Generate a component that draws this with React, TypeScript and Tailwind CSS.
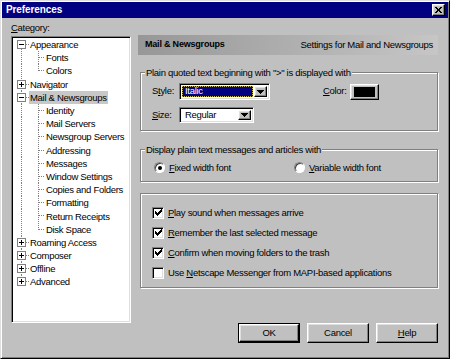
import React from "react";

const font = "font-['Liberation_Sans',Arial,sans-serif]";

const raised =
  "border border-t-white border-l-white border-r-black border-b-black shadow-[inset_-1px_-1px_0_#808080,inset_1px_1px_0_#dfdfdf]";
const sunken =
  "border border-t-[#808080] border-l-[#808080] border-r-white border-b-white shadow-[inset_1px_1px_0_#000,inset_-1px_-1px_0_#dfdfdf]";

type TreeItem = {
  label: string;
  level: 0 | 1;
  toggle?: "+" | "-";
  last?: boolean;
  selected?: boolean;
};

const tree: TreeItem[] = [
  { label: "Appearance", level: 0, toggle: "-" },
  { label: "Fonts", level: 1 },
  { label: "Colors", level: 1, last: true },
  { label: "Navigator", level: 0, toggle: "+" },
  { label: "Mail & Newsgroups", level: 0, toggle: "-", selected: true },
  { label: "Identity", level: 1 },
  { label: "Mail Servers", level: 1 },
  { label: "Newsgroup Servers", level: 1 },
  { label: "Addressing", level: 1 },
  { label: "Messages", level: 1 },
  { label: "Window Settings", level: 1 },
  { label: "Copies and Folders", level: 1 },
  { label: "Formatting", level: 1 },
  { label: "Return Receipts", level: 1 },
  { label: "Disk Space", level: 1, last: true },
  { label: "Roaming Access", level: 0, toggle: "+" },
  { label: "Composer", level: 0, toggle: "+" },
  { label: "Offline", level: 0, toggle: "+" },
  { label: "Advanced", level: 0, toggle: "+" },
];

function RootCell({ first, last, toggle }: { first?: boolean; last?: boolean; toggle?: "+" | "-" }) {
  return (
    <svg viewBox="0 0 16 13" preserveAspectRatio="none" className="h-full w-[16px] shrink-0" shapeRendering="crispEdges">
      <line x1="8.5" y1={first ? 6.5 : 0} x2="8.5" y2={last ? 6.5 : 13} stroke="#808080" strokeDasharray="1 1" />
      {toggle && (
        <>
          <line x1="13" y1="6.5" x2="16" y2="6.5" stroke="#808080" strokeDasharray="1 1" />
          <rect x="4.5" y="2.5" width="8" height="8" fill="#fff" stroke="#808080" />
          <line x1="6" y1="6.5" x2="11" y2="6.5" stroke="#000" />
          {toggle === "+" && <line x1="8.5" y1="4" x2="8.5" y2="9" stroke="#000" />}
        </>
      )}
    </svg>
  );
}

function ChildCell({ last }: { last?: boolean }) {
  return (
    <svg viewBox="0 0 16 13" preserveAspectRatio="none" className="h-full w-[16px] shrink-0" shapeRendering="crispEdges">
      <line x1="9.5" y1="0" x2="9.5" y2={last ? 6.5 : 13} stroke="#808080" strokeDasharray="1 1" />
      <line x1="10" y1="6.5" x2="16" y2="6.5" stroke="#808080" strokeDasharray="1 1" />
    </svg>
  );
}

function U({ children }: { children: React.ReactNode }) {
  return <span className="underline underline-offset-[1px]">{children}</span>;
}

function DropButton() {
  return (
    <div className={`flex h-full w-[13px] shrink-0 items-center justify-center bg-[#c0c0c0] ${raised}`}>
      <svg width="7" height="4" viewBox="0 0 7 4" shapeRendering="crispEdges">
        <path d="M0 0H7L3.5 4Z" fill="#000" />
      </svg>
    </div>
  );
}

function Group({ title, className, children }: { title?: string; className?: string; children?: React.ReactNode }) {
  return (
    <div className={`relative ml-[2px] border border-[#808080] shadow-[inset_1px_1px_0_#fff,1px_1px_0_#fff] ${className}`}>
      {title && (
        <span className="absolute left-[4px] top-[-7px] bg-[#c0c0c0] px-[1px] leading-[13px]">{title}</span>
      )}
      {children}
    </div>
  );
}

function Check({ checked, children }: { checked?: boolean; children: React.ReactNode }) {
  return (
    <div className="flex h-[13px] items-center">
      <div className={`flex h-[12px] w-[12px] shrink-0 items-center justify-center bg-white ${sunken}`}>
        {checked && (
          <svg width="7" height="7" viewBox="0 0 7 7" shapeRendering="crispEdges">
            <path d="M0 2h1v1h1v1h1V3h1V2h1V1h1V0h1v3h-1v1h-1v1h-1v1h-1v1H2V6H1V5H0Z" fill="#000" />
          </svg>
        )}
      </div>
      <span className="ml-[4px] whitespace-nowrap leading-[13px]">{children}</span>
    </div>
  );
}

function Radio({ checked, children, className }: { checked?: boolean; children: React.ReactNode; className?: string }) {
  return (
    <div className={`flex h-[13px] items-center ${className ?? ""}`}>
      <div className="flex h-[11px] w-[11px] items-center justify-center rounded-full border border-t-[#808080] border-l-[#808080] border-r-white border-b-white bg-white shadow-[inset_1px_1px_0_#404040]">
        {checked && <div className="h-[4px] w-[4px] rounded-full bg-black" />}
      </div>
      <span className="ml-[4px] leading-[13px]">{children}</span>
    </div>
  );
}

function Button({ children, isDefault }: { children: React.ReactNode; isDefault?: boolean }) {
  return (
    <div className={`h-[20px] w-[62px] ${isDefault ? "border border-black" : ""}`}>
      <div className={`flex h-full w-full items-center justify-center bg-[#c0c0c0] ${raised}`}>{children}</div>
    </div>
  );
}

export default function App() {
  return (
    <div
      className={`flex h-[359px] w-[450px] flex-col border border-t-[#dfdfdf] border-l-[#dfdfdf] border-r-black border-b-black bg-[#c0c0c0] p-[1px] text-[9.5px] tracking-[-0.3px] text-black shadow-[inset_1px_1px_0_#fff,inset_-1px_-1px_0_#808080] ${font}`}
    >
      {/* Title bar */}
      <div className="flex h-[16px] items-center bg-[#000080] pl-[4px] pr-[3px]">
        <span className="text-[10px] font-bold leading-[16px] tracking-[-0.1px] text-white">Preferences</span>
        <div className={`ml-auto flex h-[12px] w-[13px] items-center justify-center bg-[#c0c0c0] ${raised}`}>
          <svg width="7" height="6" viewBox="0 0 7 6" shapeRendering="crispEdges">
            <path d="M0 0h2v1h1v1h1V1h1V0h2v1H6v1H5v2h1v1h1v1H5V5H4V4H3v1H2v1H0V5h1V4h1V2H1V1H0Z" fill="#000" />
          </svg>
        </div>
      </div>

      <div className="flex px-[9px] pt-[3px]">
        {/* Category tree */}
        <div className="w-[120px] shrink-0">
          <div className="h-[13px] leading-[13px]">
            <U>C</U>ategory:
          </div>
          <div className={`mt-[2px] h-[287px] bg-white p-[1px] ${sunken}`}>
            {tree.map((item, i) => (
              <div key={item.label} className="flex h-[13.2px] items-center">
                <RootCell
                  first={i === 0}
                  last={i === tree.length - 1}
                  toggle={item.level === 0 ? item.toggle : undefined}
                />
                {item.level === 1 && <ChildCell last={item.last} />}
                <span
                  className={`whitespace-nowrap px-[1px] leading-[13px] ${item.selected ? "bg-[#c8c8c8]" : ""}`}
                >
                  {item.label}
                </span>
              </div>
            ))}
          </div>
        </div>

        {/* Settings panel */}
        <div className="ml-[7px] mt-[14px] w-[300px] shrink-0">
          <div className="flex h-[20px] items-center justify-between bg-linear-to-r from-[#979797] to-[#c6c6c6] pl-[7px] pr-[5px]">
            <span className="text-[9px] font-bold tracking-[-0.2px]">Mail &amp; Newsgroups</span>
            <span>Settings for Mail and Newsgroups</span>
          </div>

          <Group title={'Plain quoted text beginning with ">" is displayed with'} className="mt-[17px] h-[59px] pl-[11px] pt-[10px]">
            <div className="flex h-[17px] items-center">
              <span className="w-[27px]">
                S<U>t</U>yle:
              </span>
              <div className={`flex h-[17px] w-[91px] bg-white p-[2px] ${sunken}`}>
                <div className="mr-[1px] flex flex-1 items-center border border-dotted border-[#c8b850] bg-[#000080] pl-[2px] text-white">
                  Italic
                </div>
                <DropButton />
              </div>
              <span className="ml-[53px] w-[27px]">
                <U>C</U>olor:
              </span>
              <div className={`flex h-[16px] w-[29px] items-center justify-center bg-[#c0c0c0] ${raised}`}>
                <div className="h-[10px] w-[21px] bg-black" />
              </div>
            </div>
            <div className="mt-[7px] flex h-[16px] items-center">
              <span className="w-[27px]">
                <U>S</U>ize:
              </span>
              <div className={`flex h-[16px] w-[75px] bg-white p-[2px] ${sunken}`}>
                <div className="flex flex-1 items-center pl-[3px]">Regular</div>
                <DropButton />
              </div>
            </div>
          </Group>

          <Group title="Display plain text messages and articles with" className="mt-[18px] h-[33px] pl-[13px] pt-[11px]">
            <div className="flex">
              <Radio checked className="w-[140px]">
                <U>F</U>ixed width font
              </Radio>
              <Radio>
                <U>V</U>ariable width font
              </Radio>
            </div>
          </Group>

          <Group className="mt-[11px] flex h-[95px] flex-col gap-[7px] pl-[11px] pt-[12px]">
            <Check checked>
              <U>P</U>lay sound when messages arrive
            </Check>
            <Check checked>
              <U>R</U>emember the last selected message
            </Check>
            <Check checked>
              <U>C</U>onfirm when moving folders to the trash
            </Check>
            <Check>
              Use <U>N</U>etscape Messenger from MAPI-based applications
            </Check>
          </Group>

          <div className="mt-[35px] flex justify-end gap-[7px]">
            <Button isDefault>OK</Button>
            <Button>Cancel</Button>
            <Button>
              <span>
                <U>H</U>elp
              </span>
            </Button>
          </div>
        </div>
      </div>
    </div>
  );
}
